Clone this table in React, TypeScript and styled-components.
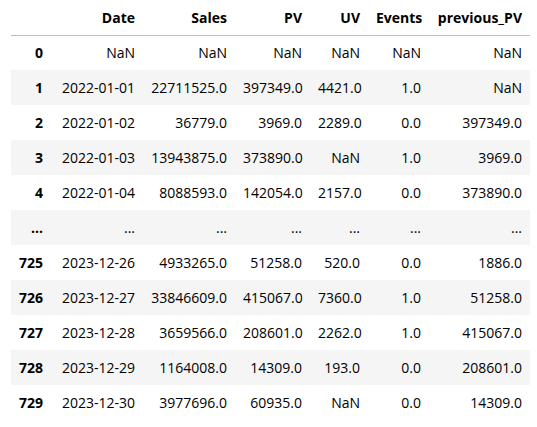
import React from "react";
import styled, { createGlobalStyle } from "styled-components";

const Global = createGlobalStyle`
  html, body { margin: 0; padding: 0; background: #ffffff; }
  body { font-family: "Open Sans", "Noto Sans", "Liberation Sans", sans-serif; }
`;

const Wrap = styled.div`
  padding: 0 0 0 11px;
`;

const Table = styled.table`
  border-collapse: collapse;
  table-layout: fixed;
  width: 519px;
  font-size: 14px;
  color: #000;
`;

const HeadCell = styled.th`
  height: 35px;
  padding: 0 8px;
  text-align: right;
  vertical-align: middle;
  font-weight: 700;
  border-bottom: 1px solid #bdbdbd;
  white-space: nowrap;
  box-sizing: border-box;
`;

const Row = styled.tr<{ $striped: boolean }>`
  background: ${(p) => (p.$striped ? "#f5f5f5" : "transparent")};
`;

const IndexCell = styled.th`
  height: 35px;
  padding: 0 8px;
  text-align: right;
  vertical-align: middle;
  font-weight: 700;
  white-space: nowrap;
  box-sizing: border-box;
`;

const Cell = styled.td`
  height: 35px;
  padding: 0 8px;
  text-align: right;
  vertical-align: middle;
  white-space: nowrap;
  box-sizing: border-box;
`;

const widths = [40, 92, 92, 75, 58, 61, 101];
const headers = ["", "Date", "Sales", "PV", "UV", "Events", "previous_PV"];

const rows: string[][] = [
  ["0", "NaN", "NaN", "NaN", "NaN", "NaN", "NaN"],
  ["1", "2022-01-01", "22711525.0", "397349.0", "4421.0", "1.0", "NaN"],
  ["2", "2022-01-02", "36779.0", "3969.0", "2289.0", "0.0", "397349.0"],
  ["3", "2022-01-03", "13943875.0", "373890.0", "NaN", "1.0", "3969.0"],
  ["4", "2022-01-04", "8088593.0", "142054.0", "2157.0", "0.0", "373890.0"],
  ["...", "...", "...", "...", "...", "...", "..."],
  ["725", "2023-12-26", "4933265.0", "51258.0", "520.0", "0.0", "1886.0"],
  ["726", "2023-12-27", "33846609.0", "415067.0", "7360.0", "1.0", "51258.0"],
  ["727", "2023-12-28", "3659566.0", "208601.0", "2262.0", "1.0", "415067.0"],
  ["728", "2023-12-29", "1164008.0", "14309.0", "193.0", "0.0", "208601.0"],
  ["729", "2023-12-30", "3977696.0", "60935.0", "NaN", "0.0", "14309.0"],
];

export default function App() {
  return (
    <>
      <Global />
      <Wrap>
        <Table>
          <colgroup>
            {widths.map((w, i) => (
              <col key={i} style={{ width: w }} />
            ))}
          </colgroup>
          <thead>
            <tr>
              {headers.map((h, i) => (
                <HeadCell key={i}>{h}</HeadCell>
              ))}
            </tr>
          </thead>
          <tbody>
            {rows.map((r, i) => (
              <Row key={i} $striped={i % 2 === 1}>
                <IndexCell>{r[0]}</IndexCell>
                {r.slice(1).map((c, j) => (
                  <Cell key={j}>{c}</Cell>
                ))}
              </Row>
            ))}
          </tbody>
        </Table>
      </Wrap>
    </>
  );
}
